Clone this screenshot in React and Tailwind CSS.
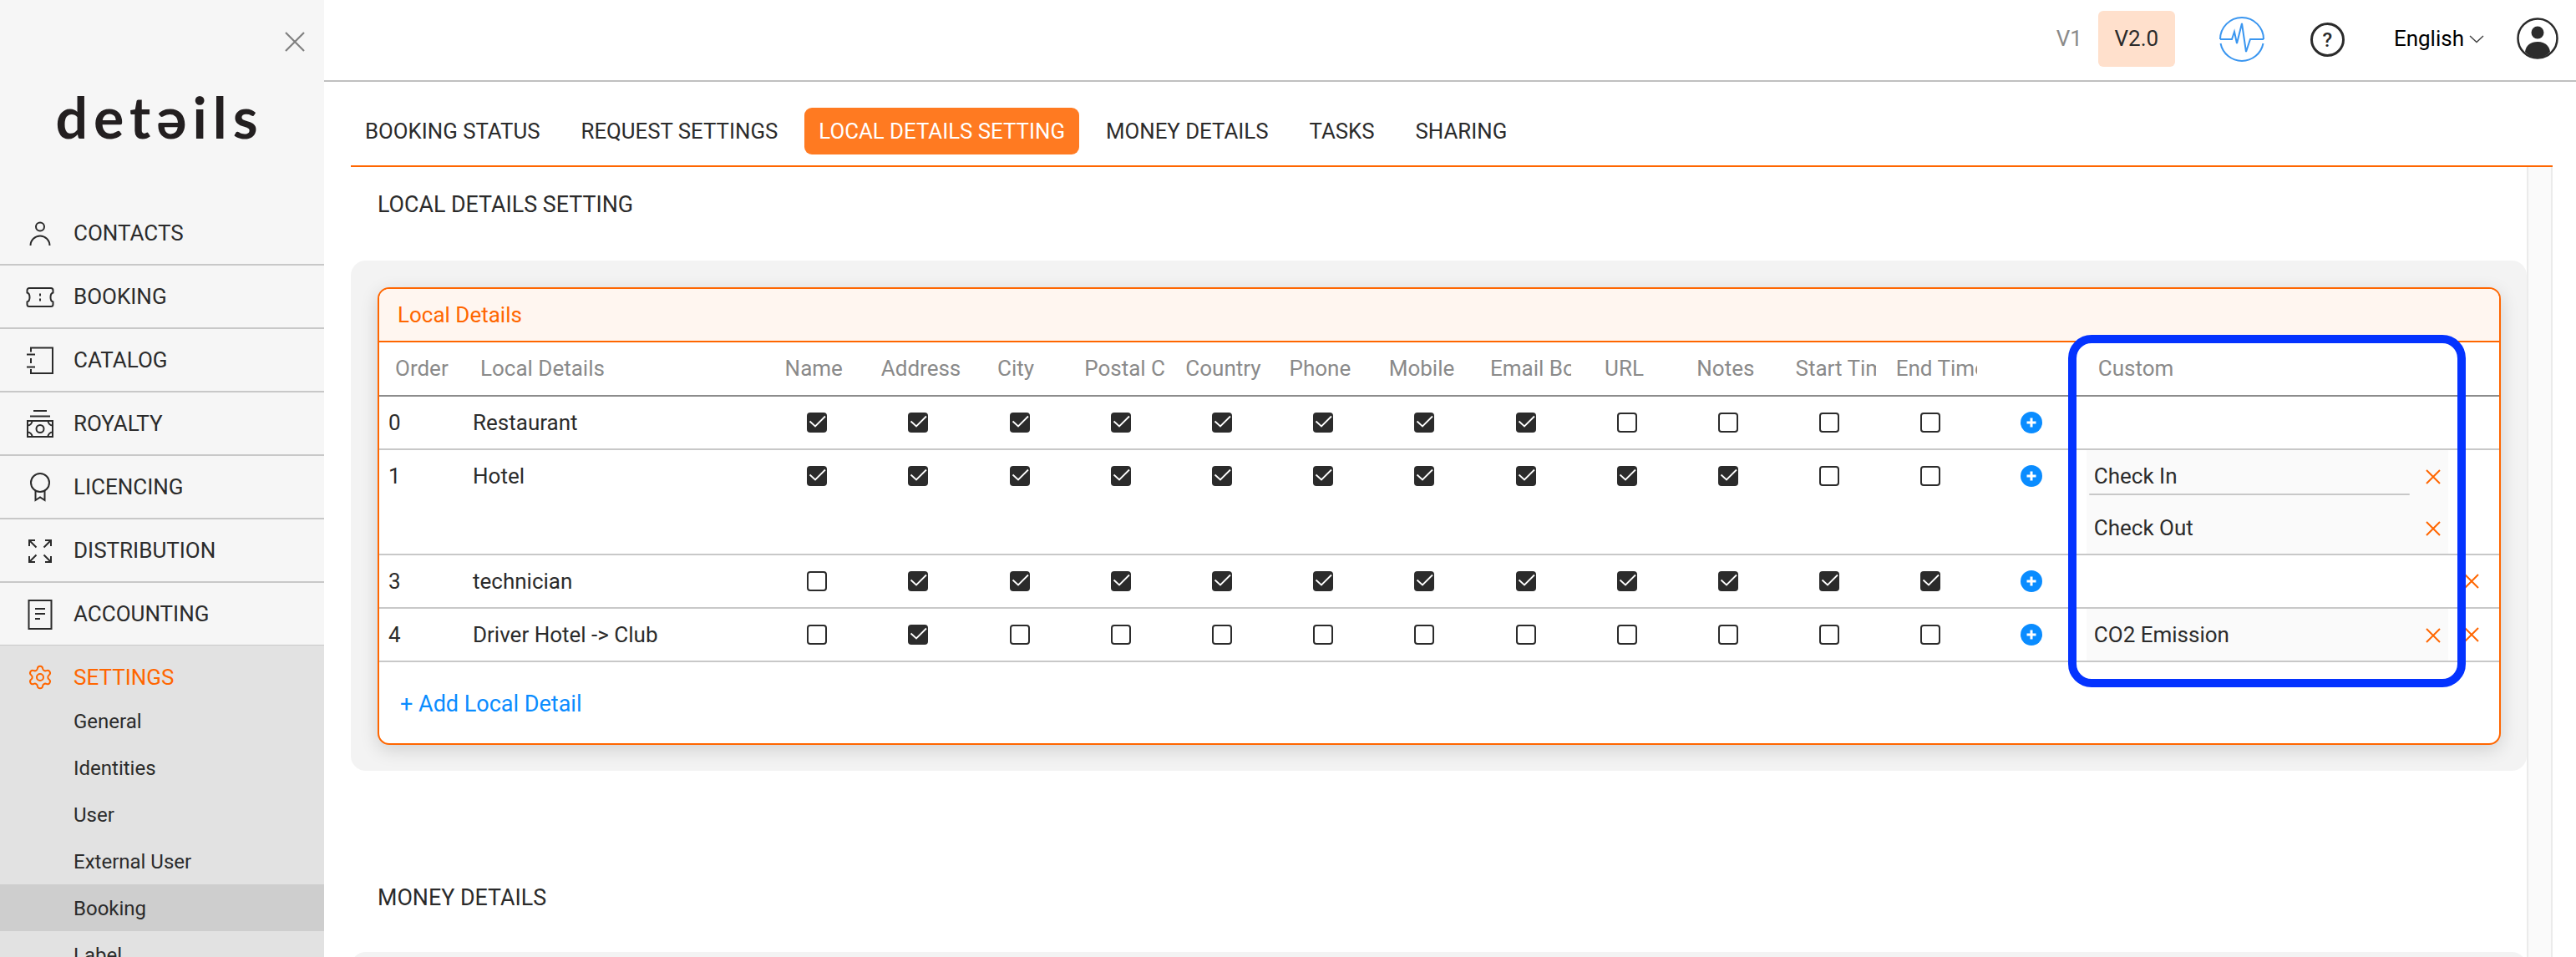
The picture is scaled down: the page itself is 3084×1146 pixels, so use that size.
import { Settings } from "lucide-react";

const gridCols = "grid grid-cols-[102px_361.6px_repeat(12,121.2px)_120px_445px_1fr]";

const headers = [
    { label: "Name", cls: "ml-[22px]" },
    { label: "Address", cls: "ml-[16px]" },
    { label: "City", cls: "ml-[34px]" },
    { label: "Postal Code", cls: "ml-[17px]" },
    { label: "Country", cls: "ml-[17px]" },
    { label: "Phone", cls: "ml-[20px]" },
    { label: "Mobile", cls: "ml-[18px]" },
    { label: "Email Body", cls: "ml-[18px]" },
    { label: "URL", cls: "ml-[34px]" },
    { label: "Notes", cls: "ml-[23px]" },
    { label: "Start Time", cls: "ml-[20px]" },
    { label: "End Time", cls: "ml-[19px]" },
];

const rows = [
    { order: "0", name: "Restaurant", checks: [1, 1, 1, 1, 1, 1, 1, 1, 0, 0, 0, 0], custom: [] },
    { order: "1", name: "Hotel", checks: [1, 1, 1, 1, 1, 1, 1, 1, 1, 1, 0, 0], custom: ["Check In", "Check Out"] },
    { order: "3", name: "technician", checks: [0, 1, 1, 1, 1, 1, 1, 1, 1, 1, 1, 1], custom: [], remove: true },
    { order: "4", name: "Driver Hotel -> Club", checks: [0, 1, 0, 0, 0, 0, 0, 0, 0, 0, 0, 0], custom: ["CO2 Emission"], remove: true },
];

const tabs = ["BOOKING STATUS", "REQUEST SETTINGS", "LOCAL DETAILS SETTING", "MONEY DETAILS", "TASKS", "SHARING"];

const stroke = { fill: "none", stroke: "currentColor", strokeWidth: 2 };

function Icon({ children }) {
    return (
        <svg width="36" height="36" viewBox="0 0 36 36" className="shrink-0" {...stroke}>
            {children}
        </svg>
    );
}

const navItems = [
    {
        label: "CONTACTS",
        icon: (
            <Icon>
                <circle cx="18" cy="9.500" r="5" />
                <path d="M6.500 32C6.500 25.500 12 20.500 18 20.500S29.500 25.500 29.500 32" />
            </Icon>
        ),
    },
    {
        label: "BOOKING",
        icon: (
            <Icon>
                <path d="M5 7H31A2.500 2.500 0 0 1 33.500 9.500V12.500C29.500 13.500 29.500 22.500 33.500 23.500V26.500A2.500 2.500 0 0 1 31 29H5A2.500 2.500 0 0 1 2.500 26.500V23.500C6.500 22.500 6.500 13.500 2.500 12.500V9.500A2.500 2.500 0 0 1 5 7Z" />
                <path d="M18 13.500V16.500M18 19.500V22.500" />
            </Icon>
        ),
    },
    {
        label: "CATALOG",
        icon: (
            <Icon>
                <path d="M7 7.500V2.500H33V33H7V28" />
                <path d="M2 10.500H12M2 25.500H12M7 15V21" />
            </Icon>
        ),
    },
    {
        label: "ROYALTY",
        icon: (
            <Icon>
                <path d="M10 2H26M6 8.500H30" />
                <rect x="3" y="14" width="30" height="19" />
                <circle cx="18" cy="23.500" r="4.500" />
                <path d="M3 19.500C6 19.500 8.500 17 8.500 14M33 19.500C30 19.500 27.500 17 27.500 14M3 27.500C6 27.500 8.500 30 8.500 33M33 27.500C30 27.500 27.500 30 27.500 33" />
            </Icon>
        ),
    },
    {
        label: "LICENCING",
        icon: (
            <Icon>
                <circle cx="18" cy="12" r="11" />
                <path d="M12.500 22V33L18 29.500L23.500 33V22" />
            </Icon>
        ),
    },
    {
        label: "DISTRIBUTION",
        icon: (
            <Icon>
                <path d="M5 12V5H12M5 5L13.500 13.500M31 12V5H24M31 5L22.500 13.500M5 24V31H12M5 31L13.500 22.500M31 24V31H24M31 31L22.500 22.500" />
            </Icon>
        ),
    },
    {
        label: "ACCOUNTING",
        icon: (
            <Icon>
                <rect x="4.500" y="1" width="27" height="34" />
                <path d="M12 11H24M12 17H24M12 23H18" />
            </Icon>
        ),
    },
];

const subItems = ["General", "Identities", "User", "External User", "Booking", "Label"];

function Checkbox({ checked }) {
    if (!checked) {
        return <div className="w-[24px] h-[24px] rounded-[4px] border-2 border-[#2b2b2b] bg-white" />;
    }
    return (
        <div className="w-[24px] h-[24px] rounded-[4px] bg-[#2b2b2b]">
            <svg width="24" height="24" viewBox="0 0 24 24" fill="none" stroke="white" strokeWidth="1.800">
                <path d="M3.500 10.500L10 16.500L22 4.500" />
            </svg>
        </div>
    );
}

function RemoveX() {
    return (
        <svg width="18" height="18" viewBox="0 0 18 18" stroke="#ff6600" strokeWidth="2" fill="none">
            <path d="M1 1L17 17M17 1L1 17" />
        </svg>
    );
}

function PlusCircle() {
    return (
        <div className="w-[26px] h-[26px] rounded-full bg-[#0a8cff] flex items-center justify-center">
            <svg width="14" height="14" viewBox="0 0 14 14" stroke="white" strokeWidth="3">
                <path d="M7 1.500V12.500M1.500 7H12.500" />
            </svg>
        </div>
    );
}

function Sidebar() {
    return (
        <div className="w-[388px] h-full shrink-0 bg-[#f6f6f6] flex flex-col overflow-hidden text-[#2b2b2b]">
            <div className="h-[242px] shrink-0 flex flex-col">
                <div className="flex justify-end pt-[38px] pr-[23px]">
                    <svg width="24" height="24" viewBox="0 0 24 24" stroke="#808080" strokeWidth="2.200">
                        <path d="M1 1L23 23M23 1L1 23" />
                    </svg>
                </div>
                <div className="mt-[43px] pr-[6px] text-center font-['Lato',sans-serif] font-bold text-[68px] leading-[70px] tracking-[7px] text-[#231f20]">
                    detəils
                </div>
            </div>
            {navItems.map((item) => (
                <div key={item.label} className="h-[76px] shrink-0 flex items-center gap-[22px] pl-[30px] pt-[1px] border-b-2 border-[#c8c8c8] text-[26px] last:border-b-0">
                    {item.icon}
                    <span>{item.label}</span>
                </div>
            ))}
            <div className="flex-1 bg-[#e2e2e2] -mt-[1px]">
                <div className="h-[62px] pt-[14px] flex items-center gap-[22px] pl-[30px] text-[26px] text-[#ff6600]">
                    <div className="w-[36px] flex justify-center">
                        <Settings size={32} strokeWidth={1.500} />
                    </div>
                    <span>SETTINGS</span>
                </div>
                {subItems.map((item) => (
                    <div key={item} className={"h-[56px] flex items-center pl-[88px] pt-[1px] text-[24px] " + (item === "Booking" ? "bg-[#cecece]" : "")}>
                        {item}
                    </div>
                ))}
            </div>
        </div>
    );
}

function TopBar() {
    return (
        <div className="h-[98px] shrink-0 border-b-2 border-[#c0c0c0] flex items-start text-[26px]">
            <div className="ml-auto flex items-start">
                <span className="mt-[27px] text-[#8a8a8a]">V1</span>
                <div className="mt-[13px] ml-[19px] w-[92px] h-[67px] rounded-[6px] bg-[#ffe0cc] text-[#2b2b2b] flex items-center justify-center">V2.0</div>
                <svg className="mt-[20px] ml-[53px]" width="54" height="54" viewBox="0 0 54 54" fill="none" stroke="#3a96f0" strokeWidth="2">
                    <path d="M1 27A26 26 0 0 1 53 27M1.500 32A26 26 0 0 0 52.500 32" />
                    <path d="M1 27H15L18 18L21 32L27 8L32 42L37 27H53" />
                </svg>
                <div className="mt-[27px] ml-[55px] w-[41px] h-[41px] rounded-full border-[3px] border-[#2b2b2b] flex items-center justify-center text-[24px] font-medium text-[#2b2b2b]">?</div>
                <span className="mt-[27px] ml-[59px] text-black">English</span>
                <svg className="mt-[42px] ml-[6px]" width="18" height="10" viewBox="0 0 18 10" fill="none" stroke="#444" strokeWidth="1.500">
                    <path d="M1 1L9 8.500L17 1" />
                </svg>
                <svg className="mt-[21px] ml-[39px] mr-[21px]" width="50" height="50" viewBox="0 0 50 50">
                    <circle cx="25" cy="25" r="23.500" fill="white" stroke="#2b2b2b" strokeWidth="2.500" />
                    <circle cx="25" cy="18" r="7.500" fill="#2b2b2b" />
                    <path d="M10 41C11 33 17 29 25 29S39 33 40 41C36 46 30 48 25 48S14 46 10 41Z" fill="#2b2b2b" />
                </svg>
            </div>
        </div>
    );
}

function LocalDetailsCard() {
    return (
        <div className="rounded-[14px] border-2 border-[#ff6600] bg-white shadow-[0_6px_22px_rgba(0,0,0,0.14)] overflow-hidden">
            <div className="h-[64px] flex items-center pl-[22px] pt-[1px] bg-[#fff6f0] border-b-2 border-[#ff6600] text-[26px] text-[#ff6600]">
                Local Details
            </div>
            <div className={gridCols + " h-[65px] items-center border-b-2 border-[#8c8c8c] text-[26px] text-[#8a8a8a]"}>
                <div className="pl-[19px]">Order</div>
                <div className="pl-[19px]">Local Details</div>
                {headers.map((h) => (
                    <div key={h.label}>
                        <div className={"w-[97px] overflow-hidden whitespace-nowrap " + h.cls}>{h.label}</div>
                    </div>
                ))}
                <div />
                <div className="pl-[20px]">Custom</div>
                <div />
            </div>
            {rows.map((row) => (
                <div key={row.order} className={gridCols + " items-start border-b-2 border-[#c8c8c8] text-[26px] text-[#2b2b2b]"}>
                    <div className="h-[62px] flex items-center pl-[11px]">{row.order}</div>
                    <div className="h-[62px] flex items-center pl-[10px]">{row.name}</div>
                    {row.checks.map((c, i) => (
                        <div key={i} className="h-[62px] flex items-center justify-center">
                            <Checkbox checked={c} />
                        </div>
                    ))}
                    <div className="h-[62px] flex items-center justify-center">
                        <PlusCircle />
                    </div>
                    <div className={"mx-[6px] " + (row.custom.length ? "bg-[#fafafa]" : "h-[62px]")}>
                        {row.custom.map((c, i) => (
                            <div key={c} className="h-[62px] relative flex items-center pl-[9px]">
                                <span>{c}</span>
                                <div className="absolute right-[9px] top-[23px]">
                                    <RemoveX />
                                </div>
                                {row.custom.length > 1 && i === 0 && (
                                    <div className="absolute left-[3px] w-[384px] bottom-[8px] h-[2px] rounded-full bg-[#c8c8c8]" />
                                )}
                            </div>
                        ))}
                    </div>
                    <div className="h-[62px] flex items-center pl-[13px]">
                        {row.remove && <RemoveX />}
                    </div>
                </div>
            ))}
            <div className="h-[97px] flex items-center pl-[25px] pt-[4px] text-[27px] text-[#0a8cff]">+ Add Local Detail</div>
        </div>
    );
}

export default function App() {
    return (
        <div className="relative w-[3084px] h-[1146px] overflow-hidden flex bg-white font-['Roboto',sans-serif]">
            <Sidebar />
            <div className="flex-1 flex flex-col min-w-0">
                <TopBar />
                <div className="pl-[32px] pr-[28px] flex-1 flex flex-col min-h-0">
                    <div className="h-[102px] shrink-0 pt-[31px] pb-[13px] flex gap-[15px] border-b-2 border-[#ff6600] text-[25.800px] text-[#2b2b2b]">
                        {tabs.map((tab) => (
                            <div key={tab} className={"px-[17px] rounded-[9px] flex items-center " + (tab === "LOCAL DETAILS SETTING" ? "bg-[#ff7a21] text-white" : "")}>
                                {tab}
                            </div>
                        ))}
                    </div>
                    <div className="flex-1 flex min-h-0">
                        <div className="flex-1 min-w-0">
                            <div className="h-[112px] pt-[25px] pl-[32px] text-[26.800px] text-[#2b2b2b]">LOCAL DETAILS SETTING</div>
                            <div className="rounded-[18px] bg-[#f3f3f3] pt-[32px] pb-[31px] pl-[32px] pr-[31px]">
                                <LocalDetailsCard />
                            </div>
                            <div className="h-[217px] pt-[132px] pl-[32px] text-[26.800px] text-[#2b2b2b]">MONEY DETAILS</div>
                            <div className="rounded-[18px] bg-[#f3f3f3] h-[40px]" />
                        </div>
                        <div className="w-[31px] shrink-0 bg-[#fafafa] border-x-2 border-[#ebebeb]" />
                    </div>
                </div>
            </div>
            <div className="absolute left-[2476px] top-[401px] w-[476px] h-[422px] border-[10px] border-[#0433ff] rounded-[28px] pointer-events-none" />
        </div>
    );
}
